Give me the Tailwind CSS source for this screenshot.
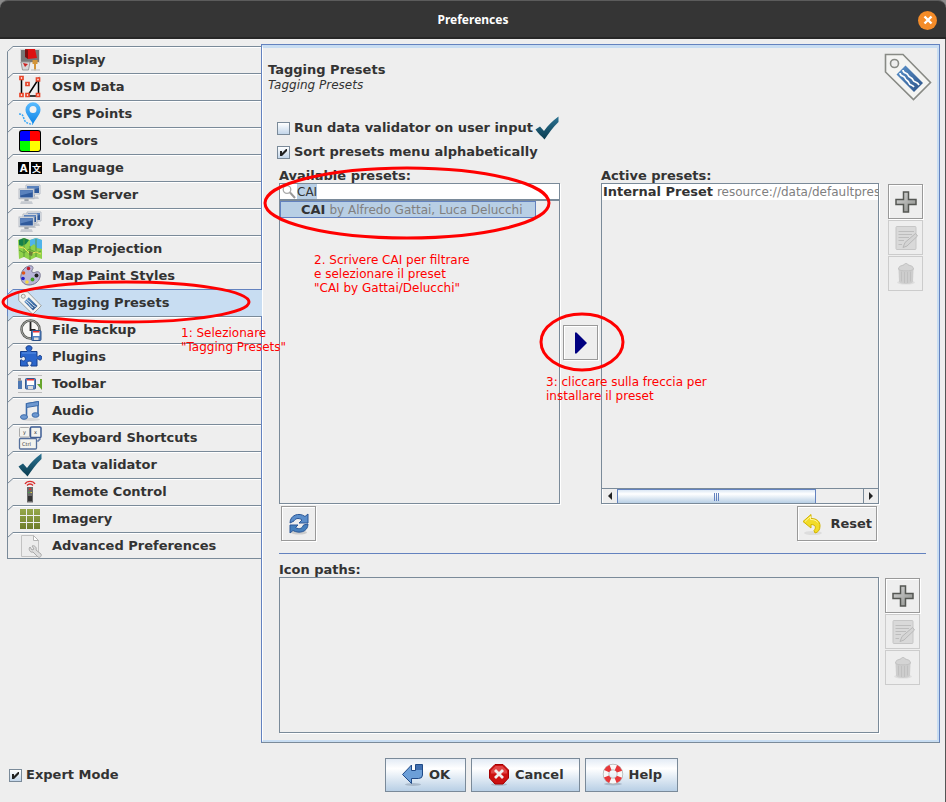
<!DOCTYPE html>
<html lang="en">
<head>
    <meta charset="UTF-8">
    <meta name="viewport" content="width=device-width, initial-scale=1.0">
    <title>Preferences</title>
    <script src="https://cdn.jsdelivr.net/npm/@tailwindcss/browser@4"></script>
</head>
<body class="bg-[#eeeeee] font-['DejaVu_Sans',sans-serif] text-[13px] leading-4 text-[#333333]">

    <!-- Shared icons -->
    <svg class="absolute size-0">
        <defs>
            <linearGradient id="blue" x1="0" y1="0" x2="1" y2="1"><stop offset="0" stop-color="#5b93cc"/><stop offset="1" stop-color="#2c5288"/></linearGradient>
            <linearGradient id="teal" x1="0" y1="0" x2="0" y2="1"><stop offset="0" stop-color="#2d7393"/><stop offset="1" stop-color="#0a3c50"/></linearGradient>
            <linearGradient id="pin" x1="0" y1="0" x2="0" y2="1"><stop offset="0" stop-color="#5cbcff"/><stop offset="1" stop-color="#0b83e6"/></linearGradient>
            <linearGradient id="gray" x1="0" y1="0" x2="1" y2="1"><stop offset="0" stop-color="#d8d8d8"/><stop offset="1" stop-color="#8c8e8a"/></linearGradient>
            <linearGradient id="olive" x1="0" y1="0" x2="0" y2="1"><stop offset="0" stop-color="#96a84a"/><stop offset="1" stop-color="#6f7d2c"/></linearGradient>
        </defs>
        <symbol id="edge" viewBox="0 0 6 27">
            <path d="M.5 0V27M.5 5.500L6 .500" fill="none" stroke="#7a8a99"/>
        </symbol>
        <symbol id="check" viewBox="0 0 24 24">
            <path d="M.5 13.500L5 10.500l4 4.500C13 9.500 17 5 23.500.500V6C18 11 14 17 9.500 23.500 6.500 20 3.500 18 .500 13.500z" fill="url(#teal)"/>
        </symbol>
        <symbol id="tag" viewBox="0 0 48 48">
            <path d="M1.500 1.500h17.500l27.500 28-17 17L1.500 19z" fill="#f4f4f2" stroke="#888a85" stroke-width="1.600"/>
            <circle cx="10.500" cy="10.500" r="4" fill="#eee" stroke="#888a85" stroke-width="1.600"/>
            <path d="M21.500 12.500L39 30l-9 9-17.500-17.500z" fill="url(#blue)"/>
            <path d="M19 17c0 4 4 2 5 5s4 2 5 5 4 1 6 5M16 20c0 4 4 2 5 5s3 2 4 5 3 1 5 4" fill="none" stroke="#fff" stroke-width="1.700"/>
        </symbol>
        <symbol id="monitor" viewBox="0 0 16 16">
            <path d="M1 1h14v9H1z" fill="#eceff3" stroke="#b4bac3"/>
            <path d="M2 2h12v7H2z" fill="#2f5a9c"/>
            <path d="M2 2h12v2L2 7z" fill="#5a82bd"/>
            <path d="M6 10.500h4v2H6z" fill="#9aa0a8"/>
            <path d="M3 12.500h10l1 2.500H2z" fill="#c6cad0"/>
        </symbol>
        <symbol id="plus" viewBox="0 0 22 22">
            <path d="M8.500 1h5v7.500H21v5h-7.500V21h-5v-7.500H1v-5h7.500z" fill="url(#gray)" stroke="#555753" stroke-width="1.500"/>
        </symbol>
        <symbol id="edit" viewBox="0 0 24 24">
            <rect x="2" y="0.500" width="20" height="23" rx="1" fill="#d9d9d9" stroke="#c6c6c6"/>
            <path d="M4.500 5.500H20M4.500 8.500H18M4.500 11.500H15M4.500 14.500H10M4.500 18.500H8" stroke="#bdbdbd"/>
            <path d="M9 21.500l2-5L21.500 7.500l2 2.500L13 20z" fill="#d4d4d4" stroke="#b8b8b8"/>
        </symbol>
        <symbol id="trash" viewBox="0 0 24 24">
            <ellipse cx="12" cy="20.500" rx="9" ry="2" fill="#dedede"/>
            <path d="M4.500 7h15l-.5 13c-2 2.500-12 2.500-14 0z" fill="#cdcdcd"/>
            <path d="M7.500 9.500v10M10.500 10v11M13.500 10v11M16.500 9.500v10" stroke="#c0c0c0"/>
            <path d="M10 3c0-2 4-2 4 0 3 .5 5.500 1.500 5.500 4 0 2.500-15 2.500-15 0C4.500 4.500 7 3.500 10 3z" fill="#d4d4d4" stroke="#c2c2c2"/>
        </symbol>
    </svg>

    <div class="relative flex min-h-screen flex-col">

        <!-- Title bar -->
        <header class="bg-[#8a8a8a]">
            <div class="grid h-[39px] grid-cols-[1fr_auto_1fr] items-center rounded-t-lg border-t border-[#5c5c5c] bg-[#353535] px-[9px] shadow-[inset_0_-2px_0_#262626]">
                <span></span>
                <h1 class="font-['Noto_Sans',sans-serif] text-[12px] font-bold text-white">Preferences</h1>
                <button type="button" aria-label="Close" class="flex size-[19px] items-center justify-center justify-self-end rounded-full bg-[#f48c29]">
                    <svg class="size-2.5" viewBox="0 0 10 10"><path d="M1.500 1.500l7 7M8.500 1.500l-7 7" stroke="#fff" stroke-width="2.400"/></svg>
                </button>
            </div>
        </header>

        <div class="flex flex-1 flex-col border-r border-[#555555]">
        <main class="flex flex-1 pt-[5px] pr-[5px] pl-[7px]">

            <!-- Categories -->
            <nav id="tabs" class="z-10 w-[254px] shrink-0 self-start border-b border-[#7a8a99] pt-0.5 font-bold">
                <button type="button" class="flex h-[27px] w-full text-left">
                    <svg class="h-[27px] w-1.5" viewBox="0 0 6 27"><path d="M.5 27V5.500L6 .500" fill="none" stroke="#7a8a99"/></svg>
                    <span class="flex h-[27px] flex-1 items-center gap-2.5 border-t border-[#7a8a99] pl-[5px] shadow-[inset_0_1px_0_white]">
                        <svg class="size-6" viewBox="0 0 24 24">
                            <rect x="2.500" y="1.500" width="19" height="13" fill="#777" stroke="#d8d8d8"/>
                            <path d="M8 1h9l2 9-9 1z" fill="#dd1111"/><path d="M7 1l3 1v9l-3-2z" fill="#7a1010"/>
                            <path d="M14.500 12h5v4h-1.500v5l-1 2-1-2v-5h-1.500z" fill="#d3963b"/>
                            <path d="M3 14h9l-1.500 8h-6z" fill="#d6d6d6" stroke="#999"/><path d="M5 15l5 1-3 3z" fill="#c22"/>
                            <path d="M13 22h9" stroke="#bbb"/>
                        </svg>
                        Display
                    </span>
                </button>
                <button type="button" class="flex h-[27px] w-full text-left">
                    <svg class="h-[27px] w-1.5"><use href="#edge"/></svg>
                    <span class="flex h-[27px] flex-1 items-center gap-2.5 border-t border-[#7a8a99] pl-[5px] shadow-[inset_0_1px_0_white]">
                        <svg class="size-6" viewBox="0 0 24 24">
                            <path d="M3.500 3v18M9.500 21L20.500 4v17h-11" fill="none" stroke="#000" stroke-width="1.500"/>
                            <g fill="#fff" stroke="#e8452a" stroke-width="1.700"><path d="M2 1.500h3v3H2zM8 7.500h3v3H8zM18.500 3h3v3h-3zM2 18.500h3v3H2zM8 18.500h3v3H8zM18.500 18.500h3v3h-3z"/></g>
                        </svg>
                        OSM Data
                    </span>
                </button>
                <button type="button" class="flex h-[27px] w-full text-left">
                    <svg class="h-[27px] w-1.5"><use href="#edge"/></svg>
                    <span class="flex h-[27px] flex-1 items-center gap-2.5 border-t border-[#7a8a99] pl-[5px] shadow-[inset_0_1px_0_white]">
                        <svg class="size-6" viewBox="0 0 24 24">
                            <path d="M1 12c4 0 4 2 5 5s3 5 9 5" fill="none" stroke="#3fa9f5" stroke-width="1.500" stroke-dasharray="2 1"/>
                            <path d="M15 22C11 15 7.500 12 7.500 7.500a7.500 7.200 0 0 1 15 0C22.500 12 19 15 15 22z" fill="url(#pin)"/>
                            <circle cx="15" cy="7.500" r="3.500" fill="#f2f2f2"/>
                        </svg>
                        GPS Points
                    </span>
                </button>
                <button type="button" class="flex h-[27px] w-full text-left">
                    <svg class="h-[27px] w-1.5"><use href="#edge"/></svg>
                    <span class="flex h-[27px] flex-1 items-center gap-2.5 border-t border-[#7a8a99] pl-[5px] shadow-[inset_0_1px_0_white]">
                        <svg class="size-6" viewBox="0 0 24 24">
                            <rect x="1" y="1" width="22" height="22" rx="3" fill="#000"/>
                            <path d="M2 12V4q0-2 2-2h8v10z" fill="#00f"/><path d="M12 2h8q2 0 2 2v8H12z" fill="#f00"/>
                            <path d="M2 12h10v10H4q-2 0-2-2z" fill="#0f0"/><path d="M12 12h10v8q0 2-2 2h-8z" fill="#ff0"/>
                        </svg>
                        Colors
                    </span>
                </button>
                <button type="button" class="flex h-[27px] w-full text-left">
                    <svg class="h-[27px] w-1.5"><use href="#edge"/></svg>
                    <span class="flex h-[27px] flex-1 items-center gap-2.5 border-t border-[#7a8a99] pl-[5px] shadow-[inset_0_1px_0_white]">
                        <svg class="size-6" viewBox="0 0 24 24">
                            <path d="M0 6h11v12H0zM13 6h11v12H13z" fill="#000"/>
                            <text x="5.500" y="15.500" text-anchor="middle" font-size="10" font-weight="bold" fill="#fff">A</text>
                            <text x="18.500" y="15.500" text-anchor="middle" font-size="9" font-family="Noto Sans CJK SC" font-weight="bold" fill="#fff">文</text>
                        </svg>
                        Language
                    </span>
                </button>
                <button type="button" class="flex h-[27px] w-full text-left">
                    <svg class="h-[27px] w-1.5"><use href="#edge"/></svg>
                    <span class="flex h-[27px] flex-1 items-center gap-2.5 border-t border-[#7a8a99] pl-[5px] shadow-[inset_0_1px_0_white]">
                        <svg class="size-6" viewBox="0 0 24 24">
                            <use href="#monitor" x="7" y="1" width="16" height="16"/>
                            <use href="#monitor" x="0" y="5" width="17" height="17"/>
                        </svg>
                        OSM Server
                    </span>
                </button>
                <button type="button" class="flex h-[27px] w-full text-left">
                    <svg class="h-[27px] w-1.5"><use href="#edge"/></svg>
                    <span class="flex h-[27px] flex-1 items-center gap-2.5 border-t border-[#7a8a99] pl-[5px] shadow-[inset_0_1px_0_white]">
                        <svg class="size-6" viewBox="0 0 24 24">
                            <use href="#monitor" x="8" y="1" width="16" height="16"/>
                            <use href="#monitor" x="4" y="3" width="16" height="16"/>
                            <use href="#monitor" x="0" y="6" width="17" height="17"/>
                        </svg>
                        Proxy
                    </span>
                </button>
                <button type="button" class="flex h-[27px] w-full text-left">
                    <svg class="h-[27px] w-1.5"><use href="#edge"/></svg>
                    <span class="flex h-[27px] flex-1 items-center gap-2.5 border-t border-[#7a8a99] pl-[5px] shadow-[inset_0_1px_0_white]">
                        <svg class="size-6" viewBox="0 0 24 24">
                            <path d="M0 3l6-2 6 2 6-2 6 2v19l-6-2-6 3-6-3-5 2z" fill="#8fd14a"/>
                            <path d="M12 3l6-2 6 2v9l-5-1-3-4-4 3z" fill="#4fb4ea"/>
                            <path d="M1 3l5-2 5 2-3 4-4 2-3-1z" fill="#16804a"/>
                            <path d="M1 13l5 3 5-4 8 4 4-2M6 1v19M18 2v18M12 9v14" fill="none" stroke="#5a9c36"/>
                            <path d="M1 10l5 1 6 6 6-2 5 2" fill="none" stroke="#f0e15a"/>
                            <path d="M11 14l4 1-1 4-3-1z" fill="#6c7f3c"/>
                        </svg>
                        Map Projection
                    </span>
                </button>
                <button type="button" class="flex h-[27px] w-full text-left">
                    <svg class="h-[27px] w-1.5"><use href="#edge"/></svg>
                    <span class="flex h-[27px] flex-1 items-center gap-2.5 border-t border-[#7a8a99] pl-[5px] shadow-[inset_0_1px_0_white]">
                        <svg class="size-6" viewBox="0 0 24 24">
                            <path d="M11 2c4-1 5 2 3 4-1 3 2 3 4 2 3-1 5 1 4 5-1 5-6 8-11 8-6 0-9-5-8-10 1-5 4-8 8-9z" fill="#b8b6d8" stroke="#77758f"/>
                            <circle cx="10.500" cy="4.500" r="1.800" fill="#c31a2a"/><circle cx="5.500" cy="9" r="1.800" fill="#e0561a"/>
                            <circle cx="5" cy="14.500" r="1.800" fill="#2222cc"/><circle cx="9" cy="18" r="1.800" fill="#f4d840"/>
                            <circle cx="14.500" cy="15.500" r="1.900" fill="#42a022"/><circle cx="18.500" cy="11.500" r="2" fill="#222"/>
                        </svg>
                        Map Paint Styles
                    </span>
                </button>
                <button type="button" aria-current="page" class="flex h-[27px] w-[255px] text-left">
                    <svg class="h-[27px] w-1.5" viewBox="0 0 6 27"><path d="M.5 27V5.500L6 .500V27z" fill="#c8ddf2"/><path d="M.5 0V27M.5 5.500L6 .500" fill="none" stroke="#6382bf"/></svg>
                    <span class="flex h-[27px] flex-1 items-center gap-2.5 border-t border-[#6382bf] bg-[#c8ddf2] pl-[5px]">
                        <svg class="size-6"><use href="#tag"/></svg>
                        Tagging Presets
                    </span>
                </button>
                <button type="button" class="flex h-[27px] w-full text-left">
                    <svg class="h-[27px] w-1.5" viewBox="0 0 6 27"><path d="M0 0h6L0 6z" fill="#c8ddf2"/><path d="M.5 0V27M.5 5.500L6 .500" fill="none" stroke="#7a8a99"/></svg>
                    <span class="flex h-[27px] flex-1 items-center gap-2.5 border-t border-[#7a8a99] pl-[5px] shadow-[inset_0_1px_0_white]">
                        <svg class="size-6" viewBox="0 0 24 24">
                            <circle cx="12.500" cy="11.500" r="9" fill="#f7f7f5" stroke="#555753" stroke-width="2.500"/>
                            <circle cx="12.500" cy="11.500" r="9" fill="none" stroke="#a8aaa6"/>
                            <path d="M12.500 4v8h5" fill="none" stroke="#222" stroke-width="1.800"/>
                            <rect x="13.500" y="12.500" width="9.500" height="10" rx="1" fill="#4f7fbf" stroke="#2d5288"/>
                            <path d="M15 13h6.500v5H15z" fill="#fff"/><path d="M15 13h6.500v1.500H15z" fill="#e33"/><path d="M16 19.500h4.500V22H16z" fill="#ddd"/>
                        </svg>
                        File backup
                    </span>
                </button>
                <button type="button" class="flex h-[27px] w-full text-left">
                    <svg class="h-[27px] w-1.5"><use href="#edge"/></svg>
                    <span class="flex h-[27px] flex-1 items-center gap-2.5 border-t border-[#7a8a99] pl-[5px] shadow-[inset_0_1px_0_white]">
                        <svg class="size-6" viewBox="0 0 24 24">
                            <path d="M2.500 6.500h6.500c1-1-1-1.500-1-3.500 0-3 6-3 6 0 0 2-2 2.500-1 3.500h6v5c1 1 1.500-1 3-1 2.500 0 2.500 4.500 0 4.500-1.500 0-2-2-3-1v7h-6c-1-1 1-1.500 1-3 0-2.500-5-2.500-5 0 0 1.500 2 2 1 3H2.500v-6c1-1 1.500 1 3 1 2.500 0 2.500-4.500 0-4.500-1.500 0-2 2-3 1z" fill="#2b66cc" stroke="#173f8c"/>
                            <path d="M4 8h14" stroke="#5f93e6"/>
                        </svg>
                        Plugins
                    </span>
                </button>
                <button type="button" class="flex h-[27px] w-full text-left">
                    <svg class="h-[27px] w-1.5"><use href="#edge"/></svg>
                    <span class="flex h-[27px] flex-1 items-center gap-2.5 border-t border-[#7a8a99] pl-[5px] shadow-[inset_0_1px_0_white]">
                        <svg class="size-6" viewBox="0 0 24 24">
                            <path d="M0 3.500h24M0 20.500h24" stroke="#bdbdbd"/>
                            <path d="M0 8.500h4V17H0z" fill="#4d78b4"/><path d="M0 6h3v3H0z" fill="#999"/>
                            <rect x="7.500" y="6.500" width="10" height="10.500" rx="1" fill="#5f88c2" stroke="#33578f"/>
                            <path d="M9 7h7v6H9z" fill="#fff"/><path d="M9 7h7v1.500H9z" fill="#e33"/><path d="M10 14h5v3h-5z" fill="#ddd"/>
                            <path d="M24 7h-2v5h-3l5 6z" fill="#67a52c"/>
                        </svg>
                        Toolbar
                    </span>
                </button>
                <button type="button" class="flex h-[27px] w-full text-left">
                    <svg class="h-[27px] w-1.5"><use href="#edge"/></svg>
                    <span class="flex h-[27px] flex-1 items-center gap-2.5 border-t border-[#7a8a99] pl-[5px] shadow-[inset_0_1px_0_white]">
                        <svg class="size-6" viewBox="0 0 24 24">
                            <ellipse cx="13" cy="20.500" rx="9" ry="1.500" fill="#d6d6d6"/>
                            <path d="M8.500 17.500V5l11.500-2v13" fill="none" stroke="#3d6cab" stroke-width="1.600"/>
                            <path d="M8.500 4.500L20.500 2.500v4l-12 2z" fill="#6d98d0" stroke="#3d6cab"/>
                            <ellipse cx="6" cy="18" rx="3.500" ry="2.300" fill="#6d98d0" stroke="#3d6cab"/>
                            <ellipse cx="17.500" cy="16" rx="3.500" ry="2.300" fill="#6d98d0" stroke="#3d6cab"/>
                        </svg>
                        Audio
                    </span>
                </button>
                <button type="button" class="flex h-[27px] w-full text-left">
                    <svg class="h-[27px] w-1.5"><use href="#edge"/></svg>
                    <span class="flex h-[27px] flex-1 items-center gap-2.5 border-t border-[#7a8a99] pl-[5px] shadow-[inset_0_1px_0_white]">
                        <svg class="size-6" viewBox="0 0 24 24">
                            <rect x="1.500" y="1.500" width="10" height="9.500" rx="1" fill="#f3f3ee" stroke="#aaa"/>
                            <rect x="12.500" y="1" width="10.500" height="10.500" rx="1" fill="#f3f3ee" stroke="#3d5c94" stroke-width="1.500"/>
                            <rect x="1.500" y="12.500" width="17" height="10.500" rx="1" fill="#f3f3ee" stroke="#55709c" stroke-width="1.300"/>
                            <path d="M22 12v2h-2v2" fill="none" stroke="#3d5c94"/>
                            <text x="5" y="7.500" font-size="5" font-weight="normal" fill="#333">y</text><text x="16" y="7.500" font-size="5" font-weight="normal" fill="#333">x</text>
                            <text x="4" y="19.500" font-size="5" font-weight="normal" fill="#333">Ctrl</text>
                        </svg>
                        Keyboard Shortcuts
                    </span>
                </button>
                <button type="button" class="flex h-[27px] w-full text-left">
                    <svg class="h-[27px] w-1.5"><use href="#edge"/></svg>
                    <span class="flex h-[27px] flex-1 items-center gap-2.5 border-t border-[#7a8a99] pl-[5px] shadow-[inset_0_1px_0_white]">
                        <svg class="size-6"><use href="#check"/></svg>
                        Data validator
                    </span>
                </button>
                <button type="button" class="flex h-[27px] w-full text-left">
                    <svg class="h-[27px] w-1.5"><use href="#edge"/></svg>
                    <span class="flex h-[27px] flex-1 items-center gap-2.5 border-t border-[#7a8a99] pl-[5px] shadow-[inset_0_1px_0_white]">
                        <svg class="size-6" viewBox="0 0 24 24">
                            <path d="M7 4c2-3.500 8-3.500 10 0M9 5.500c1.500-2 4.500-2 6 0" fill="none" stroke="#d92b2b" stroke-width="1.300"/>
                            <rect x="9" y="7" width="6" height="15.500" fill="#6a6a6a"/>
                            <path d="M11 8.500h2v1.500h-2z" fill="#e22"/><path d="M10 12h1.500v1H10z" fill="#4a4"/><path d="M12.500 12H14v1h-1.500z" fill="#dc4"/>
                            <path d="M10 16h4v5h-4z" fill="#333"/>
                        </svg>
                        Remote Control
                    </span>
                </button>
                <button type="button" class="flex h-[27px] w-full text-left">
                    <svg class="h-[27px] w-1.5"><use href="#edge"/></svg>
                    <span class="flex h-[27px] flex-1 items-center gap-2.5 border-t border-[#7a8a99] pl-[5px] shadow-[inset_0_1px_0_white]">
                        <svg class="size-6" viewBox="0 0 24 24">
                            <path d="M2 2h6v6H2zM9 2h6v6H9zM16 2h6v6h-6zM2 9h6v6H2zM9 9h6v6H9zM16 9h6v6h-6zM2 16h6v6H2zM9 16h6v6H9zM16 16h6v6h-6z" fill="url(#olive)"/>
                        </svg>
                        Imagery
                    </span>
                </button>
                <button type="button" class="flex h-[26px] w-full text-left">
                    <svg class="h-[26px] w-1.5" viewBox="0 0 6 26"><path d="M.5 0V26M.5 5.500L6 .500" fill="none" stroke="#7a8a99"/></svg>
                    <span class="flex h-[26px] flex-1 items-center gap-2.5 border-t border-[#7a8a99] pl-[5px] shadow-[inset_0_1px_0_white]">
                        <svg class="size-6" viewBox="0 0 24 24">
                            <path d="M3.500 1.500h12l5 5v16h-17z" fill="#ececec" stroke="#c2c2c2"/>
                            <path d="M15.500 1.500l5 5h-5z" fill="#fff" stroke="#b5b5b5"/>
                            <path d="M12 13c-2 2 0 6 3 5l5 5c2 1 4-1 3-3l-5-4c1-3-2-5-4-4l2 3-2 1z" fill="#ddd" stroke="#a9a9a9"/>
                        </svg>
                        Advanced Preferences
                    </span>
                </button>
            </nav>

            <!-- Selected category -->
            <section class="mb-0.5 flex min-w-0 flex-1 flex-col border border-t-[#6382bf] border-r-[#6382bf] border-b-[#7a8a99] border-l-[#6382bf]">
                <div class="flex flex-1 flex-col border-t-3 border-r-2 border-b-2 border-l border-[#c8ddf2] border-l-white pr-[11px] pb-[7px] pl-[5px]">

                    <div class="flex items-start justify-between">
                        <div class="pt-3.5">
                            <h2 class="font-bold">Tagging Presets</h2>
                            <p class="text-[12px] leading-[14px] italic">Tagging Presets</p>
                        </div>
                        <svg class="-mr-1.5 mt-[5px] size-12"><use href="#tag"/></svg>
                    </div>

                    <div class="mt-[15px] flex flex-col items-start pl-[9px] font-bold">
                        <div class="flex h-6 items-center gap-0.5">
                            <label class="flex items-center gap-1">
                                <input type="checkbox" class="size-[13px] appearance-none border border-[#7a8a99] bg-linear-to-b from-white to-[#c3d6ea]">
                                Run data validator on user input
                            </label>
                            <svg class="size-6"><use href="#check"/></svg>
                        </div>
                        <label class="flex h-6 items-center gap-1">
                            <span class="grid">
                                <input type="checkbox" checked class="peer col-start-1 row-start-1 size-[13px] appearance-none border border-[#7a8a99] bg-linear-to-b from-white to-[#c3d6ea]">
                                <svg class="invisible col-start-1 row-start-1 size-[13px] peer-checked:visible" viewBox="0 0 13 13"><path d="M3 5h2v2l4-4h1v2L5 10H3z" fill="#222"/></svg>
                            </span>
                            Sort presets menu alphabetically
                        </label>
                    </div>

                    <div class="mt-1 grid min-h-[300px] flex-1 grid-cols-[281fr_41px_278fr_47px] pl-[11px]">

                        <!-- Available presets -->
                        <div class="flex min-w-0 flex-col">
                            <label for="search" class="leading-[15px] font-bold">Available presets:</label>
                            <div class="flex h-[17px] items-center border border-[#7a8a99] bg-white pl-0.5 shadow-[1px_1px_0_white]">
                                <svg class="size-3.5 shrink-0" viewBox="0 0 14 14"><circle cx="5" cy="4.500" r="3.800" fill="#fff" stroke="#aaa" stroke-width="1.300"/><path d="M8 7.500l5 5.500" stroke="#999" stroke-width="2"/></svg>
                                <input id="search" type="text" value="CAI" class="h-[15px] min-w-0 flex-1 pl-px text-[12px] caret-transparent outline-none selection:bg-[#b8cfe5] selection:text-[#333333]">
                            </div>
                            <ul class="flex-1 border border-[#7a8a99] shadow-[1px_1px_0_white]">
                                <li class="flex h-[17px] w-64 items-center gap-1 border border-[#6382bf] bg-[#b8cfe5] pl-5 text-[12px] whitespace-nowrap text-[#808080]">
                                    <b class="text-[13px] text-[#333333]">CAI</b> by Alfredo Gattai, Luca Delucchi
                                </li>
                            </ul>
                            <div class="pt-0.5 pl-0.5">
                                <button type="button" aria-label="Refresh" class="flex size-[35px] items-center justify-center border border-[#999999] shadow-[inset_1px_1px_0_white,1px_1px_0_white]">
                                    <svg class="size-6" viewBox="0 0 24 24">
                                        <ellipse cx="12" cy="20.500" rx="8" ry="2" fill="#ccc"/>
                                        <path d="M3 11C3 3 12 0 18 4.500L21 2v9h-9l3-3c-4-3-7-1-8 1z" fill="#5b8ecb" stroke="#2a5797"/>
                                        <path d="M21 12c0 8-9 10-15 6.500L3 21v-8h8l-2.500 2.500c4 2.500 7 .5 8-2.500z" fill="#4680bd" stroke="#2a5797"/>
                                    </svg>
                                </button>
                            </div>
                        </div>

                        <div class="flex items-center justify-center pb-6">
                            <button type="button" aria-label="Install preset" class="flex size-[35px] items-center justify-center border border-[#999999] shadow-[inset_1px_1px_0_white,1px_1px_0_white]">
                                <svg class="h-[22px] w-3" viewBox="0 0 12 22"><path d="M0 .500h1.500L12 11 1.500 21.500H0z" fill="#000080"/></svg>
                            </button>
                        </div>

                        <!-- Active presets -->
                        <div class="flex min-w-0 flex-col">
                            <h3 class="leading-[15px] font-bold">Active presets:</h3>
                            <div class="flex flex-1 flex-col overflow-hidden border border-[#7a8a99] shadow-[1px_1px_0_white]">
                                <ul class="flex-1">
                                    <li class="h-4 overflow-hidden bg-white pl-px text-[12px] whitespace-nowrap text-[#808080]">
                                        <b class="text-[13px] text-[#333333]">Internal Preset</b> resource://data/defaultpresets.xml
                                    </li>
                                </ul>
                                <div class="flex h-[15px] border-t border-[#7a8a99]">
                                    <button type="button" aria-label="Scroll left" class="flex w-[15px] items-center justify-center border-l border-white">
                                        <svg class="h-2 w-1" viewBox="0 0 4 8"><path d="M4 0v8L0 4z" fill="#222"/></svg>
                                    </button>
                                    <div class="flex w-[72%] items-center justify-center gap-px border border-b-0 border-[#6382bf] bg-linear-to-b from-[#dbe7f4] via-white via-30% to-[#b8cfe5]">
                                        <span class="h-2 w-px bg-[#6382bf]"></span>
                                        <span class="h-2 w-px bg-[#6382bf]"></span>
                                        <span class="h-2 w-px bg-[#6382bf]"></span>
                                    </div>
                                    <div class="flex-1"></div>
                                    <button type="button" aria-label="Scroll right" class="flex w-[15px] items-center justify-center border-l border-[#7a8a99]">
                                        <svg class="h-2 w-1" viewBox="0 0 4 8"><path d="M0 0v8l4-4z" fill="#222"/></svg>
                                    </button>
                                </div>
                            </div>
                            <div class="flex justify-end pt-0.5 pr-0.5">
                                <button type="button" class="flex h-[35px] w-20 items-center justify-end gap-1.5 border border-[#999999] pr-1 font-bold shadow-[inset_1px_1px_0_white,1px_1px_0_white]">
                                    <svg class="size-6" viewBox="0 0 24 24">
                                        <ellipse cx="13" cy="21" rx="9" ry="2" fill="#ddd"/>
                                        <path d="M3 9.500L11 2.500v4c6 0 9 3 9 7.500 0 4-2 6.500-5 7l-1-2.500c2-2 2.500-6-3-6v3.500z" fill="#f2dc28" stroke="#d3b400"/>
                                        <path d="M5 9.500l5.500-5V7.500c4 0 6 1 7 3" fill="none" stroke="#fff6a0"/>
                                    </svg>
                                    Reset
                                </button>
                            </div>
                        </div>

                        <div class="flex flex-col items-start gap-px pt-4 pl-[9px]">
                            <button type="button" aria-label="Add preset" class="flex size-[35px] items-center justify-center border border-[#999999] shadow-[inset_1px_1px_0_white,1px_1px_0_white]"><svg class="size-[22px]"><use href="#plus"/></svg></button>
                            <button type="button" aria-label="Edit preset" disabled class="flex size-[35px] items-center justify-center border border-[#cccccc]"><svg class="size-6"><use href="#edit"/></svg></button>
                            <button type="button" aria-label="Remove preset" disabled class="flex size-[35px] items-center justify-center border border-[#cccccc]"><svg class="size-6"><use href="#trash"/></svg></button>
                        </div>
                    </div>

                    <hr class="mt-3 mb-2 ml-[11px] border-[#6382bf]">

                    <!-- Icon paths -->
                    <div class="grid grid-cols-[1fr_47px] pl-[11px]">
                        <div>
                            <h3 class="leading-[15px] font-bold">Icon paths:</h3>
                            <div class="h-[156px] border border-[#7a8a99] shadow-[1px_1px_0_white]"></div>
                        </div>
                        <div class="flex flex-col items-start gap-px pt-4 pl-1.5">
                            <button type="button" aria-label="Add icon path" class="flex size-[35px] items-center justify-center border border-[#999999] shadow-[inset_1px_1px_0_white,1px_1px_0_white]"><svg class="size-[22px]"><use href="#plus"/></svg></button>
                            <button type="button" aria-label="Edit icon path" disabled class="flex size-[35px] items-center justify-center border border-[#cccccc]"><svg class="size-6"><use href="#edit"/></svg></button>
                            <button type="button" aria-label="Remove icon path" disabled class="flex size-[35px] items-center justify-center border border-[#cccccc]"><svg class="size-6"><use href="#trash"/></svg></button>
                        </div>
                    </div>
                </div>
            </section>
        </main>

        <!-- Dialog buttons -->
        <footer class="grid grid-cols-[1fr_auto_1fr] items-center pt-[13px] pr-[9px] pb-[10px] pl-[9px] font-bold">
            <label class="flex items-center gap-1">
                <span class="grid">
                    <input type="checkbox" checked class="peer col-start-1 row-start-1 size-[13px] appearance-none border border-[#7a8a99] bg-linear-to-b from-white to-[#c3d6ea]">
                    <svg class="invisible col-start-1 row-start-1 size-[13px] peer-checked:visible" viewBox="0 0 13 13"><path d="M3 5h2v2l4-4h1v2L5 10H3z" fill="#222"/></svg>
                </span>
                Expert Mode
            </label>
            <div class="ml-[118px] flex gap-[5px]">
                <button type="button" class="flex h-[34px] items-center gap-1 border border-[#7a8a99] bg-linear-to-b from-[#e3ebf5] via-white via-30% to-[#b8cfe5] px-[15px]">
                    <svg class="size-6" viewBox="0 0 24 24">
                        <ellipse cx="12" cy="21.500" rx="8" ry="1.500" fill="#a9b9ca"/>
                        <path d="M1.500 11.500L10.500 2v5.500h4V1.500h7V12q0 3.500-4 3.500h-7v5z" fill="#6c9fd8" stroke="#204a87"/>
                        <path d="M15 7V2h6v5z" fill="#3f6fb0"/>
                    </svg>
                    OK
                </button>
                <button type="button" class="flex h-[34px] items-center gap-1 border border-[#7a8a99] bg-linear-to-b from-[#e3ebf5] via-white via-30% to-[#b8cfe5] px-[15px]">
                    <svg class="size-6" viewBox="0 0 24 24">
                        <ellipse cx="12" cy="21.500" rx="8" ry="1.500" fill="#a9b9ca"/>
                        <path d="M8 1.500h8l5.500 5.500v8L16 21H8l-5.500-6V7z" fill="#cc1111" stroke="#a40000"/>
                        <path d="M8.500 3h7L20 7.500v3H4v-3z" fill="#e04545"/>
                        <path d="M8 7l8 8M16 7l-8 8" stroke="#f0f0f0" stroke-width="2.800"/>
                    </svg>
                    Cancel
                </button>
                <button type="button" class="flex h-[34px] items-center gap-1 border border-[#7a8a99] bg-linear-to-b from-[#e3ebf5] via-white via-30% to-[#b8cfe5] px-[15px]">
                    <svg class="size-6" viewBox="0 0 24 24">
                        <ellipse cx="12" cy="21" rx="9" ry="1.500" fill="#a9b9ca"/>
                        <circle cx="12" cy="11" r="7" fill="none" stroke="#b0b0b0" stroke-width="6.500"/>
                        <circle cx="12" cy="11" r="7" fill="none" stroke="#f8f8f8" stroke-width="5"/>
                        <circle cx="12" cy="11" r="7" fill="none" stroke="#e8373a" stroke-width="5.500" stroke-dasharray="5.500 5.500" stroke-dashoffset="-2.750"/>
                    </svg>
                    Help
                </button>
            </div>
        </footer>
        </div>

        <!-- Tutorial notes drawn over the dialog -->
        <svg class="pointer-events-none absolute top-0 left-0 z-20 h-[400px] w-[640px]" fill="none" stroke="#ff0000" stroke-width="3">
            <ellipse cx="126" cy="302" rx="123" ry="20"/>
            <ellipse cx="407" cy="203" rx="142" ry="35"/>
            <ellipse cx="582" cy="342" rx="41" ry="28"/>
        </svg>
        <p class="absolute top-[326px] left-[181px] z-20 text-[12px] leading-[14px] whitespace-nowrap text-[#ff0000]">1: Selezionare<br>"Tagging Presets"</p>
        <p class="absolute top-[253px] left-[314px] z-20 text-[12px] leading-[14px] whitespace-nowrap text-[#ff0000]">2. Scrivere CAI per filtrare<br>e selezionare il preset<br>"CAI by Gattai/Delucchi"</p>
        <p class="absolute top-[375px] left-[546px] z-20 text-[12px] leading-[14px] whitespace-nowrap text-[#ff0000]">3: cliccare sulla freccia per<br>installare il preset</p>
    </div>

    <script>
        // Select the search text
        let search = document.getElementById("search");
        search.focus();
        search.select();
    </script>

</body>
</html>
